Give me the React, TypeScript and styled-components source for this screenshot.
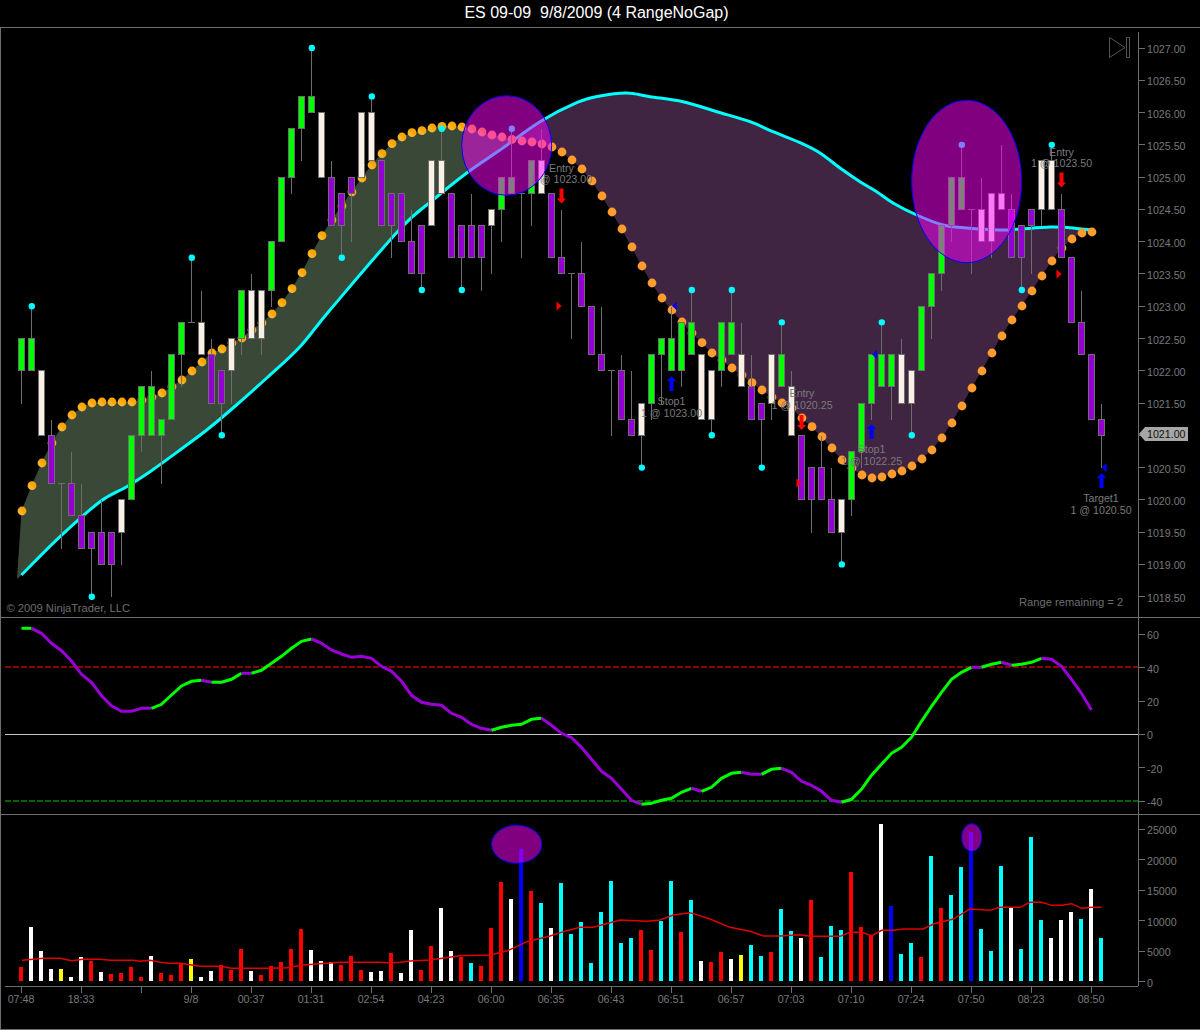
import React from "react";
import styled, { createGlobalStyle } from "styled-components";

type Kind = "g" | "w" | "p" | "d";
type Bar = [Kind, number, number, number?, number?, ("u" | "d")?];

const GREEN = "#00ff00";
const LINEN = "#faf0e6";
const PURPLE = "#9400d3";
const EDGE = "#6e6e6e";

const barX = (i: number) => 21.5 + i * 10;
const priceY = (p: number) => 48 + (1027 - p) * 64.55;
const snap = (v: number) => Math.floor(v) + 0.5;

// kind, body top, body bottom, high, low, dot
const bars: Bar[] = [
  ["g", 1022.5, 1022, undefined, 1021.5],
  ["g", 1022.5, 1022, 1023, undefined, "u"],
  ["w", 1022, 1021],
  ["p", 1021, 1020.25, 1021.25],
  ["d", 1020.25, 1020.25, undefined, 1019.25],
  ["p", 1020.25, 1019.75, 1020.75],
  ["p", 1019.75, 1019.25, 1020.25],
  ["p", 1019.5, 1019.25, undefined, 1018.5, "d"],
  ["p", 1019.5, 1019, 1020],
  ["p", 1019.5, 1019, undefined, 1018.5],
  ["w", 1020, 1019.5, undefined, 1019],
  ["g", 1021, 1020],
  ["g", 1021.75, 1021, undefined, 1020.75],
  ["g", 1021.75, 1021, 1022],
  ["g", 1021.25, 1021, undefined, 1020.25],
  ["g", 1022.25, 1021.25],
  ["g", 1022.75, 1022.25, undefined, 1021.75],
  ["d", 1022.75, 1022.75, 1023.75, undefined, "u"],
  ["w", 1022.75, 1022.25, 1023.25],
  ["p", 1022.25, 1021.5, 1022.5],
  ["p", 1022, 1021.5, undefined, 1021, "d"],
  ["w", 1022.5, 1022, undefined, 1021.5],
  ["g", 1023.25, 1022.5, undefined, 1022.25],
  ["w", 1023.25, 1022.5, 1023.5],
  ["w", 1023.25, 1022.5, undefined, 1022.25],
  ["g", 1024, 1023.25, undefined, 1023],
  ["g", 1025, 1024],
  ["g", 1025.75, 1025, undefined, 1024.75],
  ["g", 1026.25, 1025.75, undefined, 1025.25],
  ["g", 1026.25, 1026, 1027, undefined, "u"],
  ["w", 1026, 1025],
  ["p", 1025, 1024.25, 1025.25],
  ["p", 1024.75, 1024.25, undefined, 1023.75, "d"],
  ["p", 1025, 1024.75, undefined, 1024],
  ["w", 1026, 1025],
  ["w", 1026, 1025.25, 1026.25, undefined, "u"],
  ["p", 1025.25, 1024.25],
  ["p", 1024.75, 1024.25, undefined, 1023.75],
  ["p", 1024.75, 1024],
  ["p", 1024, 1023.5, 1024.5],
  ["p", 1024.25, 1023.5, undefined, 1023.25, "d"],
  ["w", 1025.25, 1024.25],
  ["w", 1025.25, 1024.75, 1025.75, undefined, "u"],
  ["p", 1024.75, 1023.75],
  ["p", 1024.25, 1023.75, undefined, 1023.25, "d"],
  ["p", 1024.25, 1023.75, 1024.75],
  ["p", 1024.25, 1023.75, undefined, 1023.25],
  ["w", 1024.5, 1024.25, undefined, 1023.5],
  ["g", 1025, 1024.5, undefined, 1024],
  ["g", 1025, 1024.75, 1025.75, undefined, "u"],
  ["d", 1024.75, 1024.75, undefined, 1023.75],
  ["g", 1025.25, 1024.75, undefined, 1024.25],
  ["w", 1025.25, 1024.75, 1025.75],
  ["p", 1024.75, 1023.75],
  ["p", 1023.75, 1023.5, 1024.5],
  ["d", 1023.5, 1023.5, undefined, 1022.5],
  ["p", 1023.5, 1023, 1024],
  ["p", 1023, 1022.25],
  ["p", 1022.25, 1022, 1023],
  ["d", 1022, 1022, undefined, 1021],
  ["p", 1022, 1021.25, 1022.25],
  ["p", 1021.25, 1021, 1022],
  ["w", 1021.5, 1021, undefined, 1020.5, "d"],
  ["g", 1022.25, 1021.5, undefined, 1021.25],
  ["g", 1022.5, 1022.25, undefined, 1021.5],
  ["g", 1022.5, 1022, 1023],
  ["g", 1022.75, 1022, undefined, 1021.75],
  ["g", 1022.75, 1022.25, 1023.25, undefined, "u"],
  ["w", 1022.25, 1021.25],
  ["w", 1022, 1021.25, undefined, 1021, "d"],
  ["g", 1022.75, 1022, undefined, 1021.75],
  ["g", 1022.75, 1022.25, 1023.25, undefined, "u"],
  ["w", 1022.25, 1021.75, 1022.75],
  ["p", 1021.75, 1021.25, 1022.25],
  ["p", 1021.5, 1021.25, undefined, 1020.5, "d"],
  ["w", 1022.25, 1021.5, undefined, 1021.25],
  ["g", 1022.25, 1021.75, 1022.75, undefined, "u"],
  ["w", 1021.75, 1021, 1022],
  ["p", 1021, 1020],
  ["p", 1020.5, 1020, undefined, 1019.5],
  ["p", 1020.5, 1020, 1021],
  ["p", 1020, 1019.5, 1020.5],
  ["w", 1020, 1019.5, undefined, 1019, "d"],
  ["g", 1020.75, 1020, undefined, 1019.75],
  ["g", 1021.5, 1020.75, undefined, 1020.5],
  ["g", 1022.25, 1021.5, undefined, 1021.25],
  ["g", 1022.25, 1021.75, 1022.75, undefined, "u"],
  ["g", 1022.25, 1021.75, undefined, 1021.25],
  ["w", 1022.25, 1021.5, 1022.5],
  ["w", 1022, 1021.5, undefined, 1021, "d"],
  ["g", 1023, 1022],
  ["g", 1023.5, 1023, undefined, 1022.5],
  ["g", 1024.25, 1023.5, undefined, 1023.25],
  ["g", 1025, 1024.25, undefined, 1024],
  ["g", 1025, 1024.5, 1025.5, undefined, "u"],
  ["d", 1024.5, 1024.5, undefined, 1023.5],
  ["w", 1024.5, 1024, 1025],
  ["w", 1024.75, 1024, undefined, 1023.75],
  ["w", 1024.75, 1024.5, 1025.5],
  ["p", 1024.5, 1023.75, 1024.75],
  ["p", 1024.25, 1023.75, undefined, 1023.25, "d"],
  ["p", 1024.5, 1024.25, undefined, 1023.5],
  ["w", 1025.25, 1024.5, undefined, 1024.25],
  ["w", 1025.25, 1024.5, 1025.5, undefined, "u"],
  ["p", 1024.5, 1023.75, 1024.75],
  ["p", 1023.75, 1022.75],
  ["p", 1022.75, 1022.25, 1023.25],
  ["p", 1022.25, 1021.25],
  ["p", 1021.25, 1021, 1021.5, 1020.5],
];

const bandY = [
  511, 485.7, 463, 443, 427, 415, 407, 403, 402, 402, 402, 402, 400, 397, 393, 386.7, 380, 371,
  362, 353, 349, 343, 338, 330, 323, 314, 302.7, 288.7, 272.7, 253.7, 235.7, 220, 206, 192, 178,
  165, 153.7, 143.7, 137, 132.7, 130.7, 128, 126.3, 126, 127, 129, 132, 135, 137, 139.3, 141, 142,
  144, 147, 152, 160, 169, 181, 196, 212, 229, 247, 266, 283, 298, 310, 322, 333, 342.7, 353, 360,
  368, 375, 382.7, 390, 397, 403, 408, 418, 426.7, 436.7, 448, 460, 468, 475, 478, 477, 474, 471,
  466, 459, 450, 438, 423, 406, 388, 371, 353, 336, 320, 306, 291, 276, 261, 248, 239, 233, 232,
];

const averageLine: [number, number][] = [
  [21.5, 575], [60, 536.7], [100, 501.7], [126.7, 486.7], [150, 471.7], [180, 450], [206.7, 430],
  [233, 408], [266.7, 378], [300, 346.7], [330, 310], [400, 229], [433, 200], [466.7, 173],
  [500, 150], [540, 121.7], [576.7, 102.7], [600, 96], [626.7, 93], [650, 96.7], [683, 101.7],
  [716.7, 111.7], [750, 121.7], [773, 131.7], [800, 142.7], [820, 153], [840, 168], [860, 181.7],
  [876.7, 191.7], [893, 203], [916.7, 215], [943, 225], [966.7, 228], [1000, 230], [1016.7, 229.3],
  [1050, 227], [1070, 227.7], [1091, 230],
];

const oscY = [
  628.3, 628.3, 633.3, 643.3, 650.7, 661, 674.3, 682.3, 695.7, 705.7, 711.3, 711.3, 708.3, 708.3,
  704.3, 695, 686, 681.3, 680.3, 682.3, 682.3, 679.3, 673.3, 673.3, 670.3, 663.3, 656.3, 648.3,
  641.3, 639, 643.3, 650, 654, 657.3, 656.3, 658.3, 666.3, 671.3, 681.3, 695.3, 702.3, 704.3,
  705.3, 713.3, 717.3, 724.3, 728.3, 730.3, 727.3, 725.3, 724.3, 719.3, 718.3, 725.3, 733.3, 737.7,
  747.3, 759.3, 771.3, 778.3, 789.3, 800.3, 804.3, 803.3, 800.3, 798.3, 792.3, 788.3, 791.3, 787.3,
  778.3, 773.3, 772.3, 774.3, 774.3, 769.3, 768.3, 772.3, 781.3, 785.3, 791.3, 800.3, 802.3, 799.3,
  789.3, 775.3, 764.3, 753.3, 747.3, 737.3, 721.3, 706.3, 692.3, 679.3, 672.3, 667.3, 667.3, 664.3,
  662.3, 665.3, 664.3, 662.3, 658.3, 659.3, 666.3, 679.3, 693.3, 710,
];

// index ranges of the oscillator drawn green, everything else is purple
const oscGreen = [[0, 1], [13, 18], [19, 22], [23, 29], [47, 52], [62, 67], [68, 72], [74, 76], [82, 95], [96, 98], [99, 102]];

const volumes = [
  14, 54, 30, 12, 12, 4, 24, 20, 9, 7, 8, 14, 4, 25, 8, 6, 17, 22, 4, 10, 16, 11, 32, 10, 6, 15, 19,
  32, 52, 31, 20, 19, 16, 25, 11, 9, 10, 28, 8, 51, 11, 35, 73, 30, 24, 18, 15, 53, 99, 82, 132, 90,
  78, 53, 98, 47, 59, 18, 69, 100, 38, 43, 51, 31, 60, 100, 49, 81, 20, 19, 29, 22, 26, 36, 25, 29,
  72, 50, 43, 81, 24, 55, 51, 109, 54, 46, 157, 75, 27, 38, 24, 125, 73, 86, 114, 149, 52, 30, 115,
  74, 32, 144, 61, 43, 61, 69, 62, 92, 43,
];
const volumeKinds = [
  "rwwwywwrwr", "rrrwrrryww", "rrrwrrrrrw", "wwrrrwwrww", "rrwwrcrrrw", "brcwcccccc",
  "ccrrccrcwr", "rwyccrccwr", "cccrrrwbcc", "rcrccbcccw", "cccwwwcwc",
].join("");
const volumeColor: Record<string, string> = {
  r: "#ff0000",
  w: "#ffffff",
  c: "#00ffff",
  b: "#0000ff",
  y: "#ffff00",
};

const volumeAverage: [number, number][] = [
  [21.7, 960.3], [33.3, 959.3], [43.3, 958.3], [60, 958.3], [71.7, 960.7], [83.3, 959.3], [100, 959.3],
  [110, 960.3], [133.3, 960.3], [140, 961.3], [150, 960.3], [160, 962.3], [170, 963.3], [180, 963.3],
  [200, 966.3], [220, 966.3], [231.7, 968.3], [270, 968.3], [286.7, 967.7], [303.3, 965], [320, 963.7],
  [340, 962.3], [380, 962.3], [390, 963], [400, 962.3], [410, 961], [430, 960], [460, 955.7], [490, 955],
  [506.7, 951], [516.7, 946.7], [526.7, 941.7], [550, 936], [566.7, 930.7], [580, 927.3], [593.3, 927.3],
  [620, 920], [646.7, 921.3], [660, 920], [673.3, 915], [690, 912.7], [710, 919], [730, 927.3], [750, 931.3],
  [763.3, 936], [780, 936], [800, 934.7], [810, 936.3], [840, 936.3], [850, 932.3], [861.7, 932.3],
  [871.7, 935.7], [881.7, 930.3], [893.3, 930.3], [903.3, 929], [923.3, 929], [933.3, 924], [953.3, 919],
  [970, 909], [990, 910.3], [1000, 907.3], [1020, 907.3], [1030, 902.3], [1041.7, 902.3], [1051.7, 905.3],
  [1061.7, 905.3], [1071.7, 903.7], [1081.7, 908.3], [1091.7, 907.3], [1101.7, 907.3],
];

const priceTicks = ["1027.00", "1026.50", "1026.00", "1025.50", "1025.00", "1024.50", "1024.00", "1023.50", "1023.00", "1022.50", "1022.00", "1021.50", "1021.00", "1020.50", "1020.00", "1019.50", "1019.00", "1018.50"];
const oscTicks = ["60", "40", "20", "0", "-20", "-40"];
const volumeTicks = ["25000", "20000", "15000", "10000", "5000", "0"];
const timeTicks: [string, number][] = [
  ["07:48", 60], ["18:33", 60], ["", 50], ["9/8", 60], ["00:37", 60], ["01:31", 60], ["02:54", 60],
  ["04:23", 60], ["06:00", 60], ["06:35", 60], ["06:43", 60], ["06:51", 60], ["06:57", 60], ["07:03", 60],
  ["07:10", 60], ["07:24", 60], ["07:50", 60], ["08:23", 60], ["08:50", 60],
];

const notes: [number, number, string, string][] = [
  [561.5, 167.7, "Entry", "1 @ 1023.00"],
  [671.5, 401, "Stop1", "1 @ 1023.00"],
  [802, 393, "Entry", "1 @ 1020.25"],
  [871.5, 449.3, "Stop1", "1 @ 1022.25"],
  [1061.5, 151.7, "Entry", "1 @ 1023.50"],
  [1101, 498.3, "Target1", "1 @ 1020.50"],
];

const lineAt = (pts: [number, number][], x: number) => {
  for (let i = 1; i < pts.length; i++) {
    if (x <= pts[i][0]) {
      const [x0, y0] = pts[i - 1];
      const [x1, y1] = pts[i];
      return y0 + ((y1 - y0) * (x - x0)) / (x1 - x0);
    }
  }
  return pts[pts.length - 1][1];
};

const toPoints = (pts: [number, number][]) => pts.map((p) => p.join(",")).join(" ");

// rounds off the corners between the read-off points of the moving average
const smoothPath = (pts: [number, number][]) => {
  let d = `M${pts[0][0]} ${pts[0][1]}`;
  for (let i = 0; i < pts.length - 1; i++) {
    const a = pts[Math.max(i - 1, 0)];
    const b = pts[i];
    const c = pts[i + 1];
    const e = pts[Math.min(i + 2, pts.length - 1)];
    const c1x = b[0] + (c[0] - a[0]) / 6;
    const c1y = b[1] + (c[1] - a[1]) / 6;
    const c2x = c[0] - (e[0] - b[0]) / 6;
    const c2y = c[1] - (e[1] - b[1]) / 6;
    d += `C${c1x} ${c1y} ${c2x} ${c2y} ${c[0]} ${c[1]}`;
  }
  return d;
};

const cloud = (from: number, to: number, start: [number, number][], end: [number, number][]) => {
  const upper: [number, number][] = [];
  const lower: [number, number][] = [];
  for (let i = from; i <= to; i++) {
    upper.push([barX(i), bandY[i]]);
    lower.unshift([barX(i), lineAt(averageLine, barX(i))]);
  }
  return toPoints([...start, ...upper, ...end, ...lower]);
};

const oscRuns = () => {
  const runs: { color: string; pts: [number, number][] }[] = [];
  for (let i = 0; i < oscY.length - 1; i++) {
    const color = oscGreen.some(([a, b]) => i >= a && i < b) ? GREEN : "#9a00d6";
    const last = runs[runs.length - 1];
    if (last && last.color === color) last.pts.push([barX(i + 1), oscY[i + 1]]);
    else runs.push({ color, pts: [[barX(i), oscY[i]], [barX(i + 1), oscY[i + 1]]] });
  }
  return runs;
};

function DownArrow({ x, y }: { x: number; y: number }) {
  return <path d={`M${x - 2} ${y}h4v10h2.5L${x} ${y + 15}L${x - 4.5} ${y + 10}h2.5z`} fill="#ff0000" />;
}

function UpArrow({ x, y }: { x: number; y: number }) {
  return <path d={`M${x - 2} ${y + 15}h4v-10h2.5L${x} ${y}L${x - 4.5} ${y + 5}h2.5z`} fill="#0000ff" />;
}

function RightMark({ x, y }: { x: number; y: number }) {
  return <path d={`M${x} ${y - 4.5}L${x + 5} ${y}L${x} ${y + 4.5}z`} fill="#ff0000" />;
}

function LeftMark({ x, y }: { x: number; y: number }) {
  return <path d={`M${x + 5} ${y - 4.5}L${x} ${y}L${x + 5} ${y + 4.5}z`} fill="#0000ff" />;
}

function Candle({ bar, i }: { bar: Bar; i: number }) {
  const [kind, top, bottom, high, low] = bar;
  const x = Math.floor(barX(i)) + 0.5;
  const yTop = snap(priceY(top));
  const yBottom = snap(priceY(bottom));
  const fill = kind === "g" ? GREEN : kind === "w" ? LINEN : PURPLE;
  return (
    <g>
      {high !== undefined && <line x1={x} x2={x} y1={snap(priceY(high))} y2={yTop} stroke={EDGE} />}
      {low !== undefined && <line x1={x} x2={x} y1={yBottom} y2={snap(priceY(low))} stroke={EDGE} />}
      {kind === "d" ? (
        <line x1={x - 3.5} x2={x + 3.5} y1={yTop} y2={yTop} stroke={EDGE} />
      ) : (
        <rect x={x - 3} y={yTop} width={6} height={yBottom - yTop} fill={fill} stroke={EDGE} />
      )}
    </g>
  );
}

function PriceChart() {
  return (
    <Plot viewBox="1 28 1137 589" width={1137} height={589}>
      <defs>
        <linearGradient id="bandDot" x1="0" y1="1" x2="1" y2="0">
          <stop offset="0.45" stopColor="#f7b52c" />
          <stop offset="0.45" stopColor="#ffa500" />
        </linearGradient>
      </defs>
      <polygon points={cloud(0, 49, [[17, 579]], [[515, 139.5]])} fill="#394837" />
      <polygon points={cloud(50, 107, [[515, 139.5]], [])} fill="#402542" />
      <path d={smoothPath(averageLine)} fill="none" stroke="#00ffff" strokeWidth={3} />
      {bandY.map((y, i) => (
        <circle key={i} cx={barX(i) + 0.5} cy={y} r={4.4} fill={i < 47 ? "url(#bandDot)" : "#ff9c2e"} />
      ))}
      <g shapeRendering="crispEdges">
        {bars.map((bar, i) => (
          <Candle key={i} bar={bar} i={i} />
        ))}
      </g>
      {bars.map((bar, i) =>
        bar[5] ? (
          <circle
            key={i}
            cx={barX(i) + 0.3}
            cy={priceY(bar[5] === "u" ? (bar[3] as number) : (bar[4] as number))}
            r={3.2}
            fill="#00ffff"
          />
        ) : null
      )}
      {notes.map(([x, y, title, fill]) => (
        <g key={title + x}>
          <Note x={x} y={y + 4}>{title}</Note>
          <Note x={x} y={y + 15.6}>{fill}</Note>
        </g>
      ))}
      <DownArrow x={561.5} y={188.5} />
      <DownArrow x={801.5} y={415} />
      <DownArrow x={1061.5} y={172.5} />
      <UpArrow x={671.5} y={376} />
      <UpArrow x={871.5} y={424} />
      <UpArrow x={1101.5} y={473} />
      <RightMark x={556.5} y={306} />
      <RightMark x={796.5} y={483} />
      <RightMark x={1056.5} y={274} />
      <LeftMark x={672} y={306} />
      <LeftMark x={872} y={354.5} />
      <LeftMark x={1101.5} y={467.5} />
      <ellipse cx={506.7} cy={145.5} rx={45} ry={49.8} fill="#ff00ff" fillOpacity={0.5} stroke="#0000ff" />
      <ellipse cx={966.7} cy={181.5} rx={55} ry={81.2} fill="#ff00ff" fillOpacity={0.5} stroke="#0000ff" />
      <path d="M1109.5 37.5V57.5L1125 47.5z M1126.5 37.5h3v20h-3z" fill="none" stroke="#555555" />
      <Caption x={6.5} y={611.5}>© 2009 NinjaTrader, LLC</Caption>
      <Caption x={1019} y={606}>Range remaining = 2</Caption>
    </Plot>
  );
}

function OscillatorChart() {
  return (
    <Plot viewBox="1 618 1137 196" width={1137} height={196}>
      <g shapeRendering="crispEdges">
        <line x1={5} x2={1138} y1={667} y2={667} stroke="#8b0000" strokeWidth={2} strokeDasharray="6 2" />
        <line x1={5} x2={1138} y1={734.5} y2={734.5} stroke="#c8c8c8" />
        <line x1={5} x2={1138} y1={801} y2={801} stroke="#006400" strokeWidth={2} strokeDasharray="6 2" />
      </g>
      {oscRuns().map((run, i) => (
        <polyline key={i} points={toPoints(run.pts)} fill="none" stroke={run.color} strokeWidth={3} />
      ))}
    </Plot>
  );
}

function VolumeChart() {
  return (
    <Plot viewBox="1 815 1137 171" width={1137} height={171}>
      <g shapeRendering="crispEdges">
        {volumes.map((h, i) => (
          <rect key={i} x={19 + i * 10} y={981 - h} width={4} height={h} fill={volumeColor[volumeKinds[i]]} />
        ))}
      </g>
      <polyline points={toPoints(volumeAverage)} fill="none" stroke="#e00000" strokeWidth={1.4} />
      <ellipse cx={516.7} cy={844.3} rx={25} ry={19} fill="#ff00ff" fillOpacity={0.5} stroke="#0000ff" />
      <ellipse cx={971.7} cy={837.5} rx={10} ry={13.8} fill="#ff00ff" fillOpacity={0.5} stroke="#0000ff" />
    </Plot>
  );
}

function Scale({ ticks, step, inset, lead }: { ticks: string[]; step: number; inset?: number; lead?: number }) {
  return (
    <Axis $inset={inset ?? 0} $lead={lead ?? 0}>
      {ticks.map((t) => (
        <Tick key={t} $step={step}>
          <span>{t}</span>
        </Tick>
      ))}
    </Axis>
  );
}

export default function App() {
  return (
    <Page>
      <GlobalStyle />
      <Title>ES 09-09  9/8/2009 (4 RangeNoGap)</Title>
      <Frame>
        <Panel $height={590}>
          <PriceChart />
          <PriceScale>
            <Scale ticks={priceTicks} step={32.27} inset={4} />
            <PriceTag>1021.00</PriceTag>
          </PriceScale>
        </Panel>
        <Panel $height={197}>
          <OscillatorChart />
          <Scale ticks={oscTicks} step={33.4} lead={-0.4} />
        </Panel>
        <Panel $height={171} $plain>
          <VolumeChart />
          <Scale ticks={volumeTicks} step={30.6} lead={-1.3} />
        </Panel>
        <TimeAxis>
          {timeTicks.map(([label, span]) => (
            <TimeCell key={label + span} $span={span}>
              <TimeLabel>{label}</TimeLabel>
            </TimeCell>
          ))}
        </TimeAxis>
      </Frame>
    </Page>
  );
}

const GlobalStyle = createGlobalStyle`
  html, body {
    margin: 0;
    padding: 0;
    background: #000000;
  }
  * {
    box-sizing: border-box;
  }
`;

const Page = styled.div`
  width: 1200px;
  height: 1030px;
  display: flex;
  flex-direction: column;
  background: #000000;
  font-family: "Liberation Sans", Arial, sans-serif;
  overflow: hidden;
`;

const Title = styled.div`
  flex: 0 0 28px;
  padding: 4px 7px 0 0;
  border-bottom: 1px solid ${EDGE};
  color: #ffffff;
  font-size: 16px;
  line-height: 18px;
  text-align: center;
  white-space: pre;
`;

const Frame = styled.div`
  flex: 1;
  min-height: 0;
  display: flex;
  flex-direction: column;
  border-left: 1px solid ${EDGE};
  border-bottom: 1px solid ${EDGE};
`;

const Panel = styled.section<{ $height: number; $plain?: boolean }>`
  flex: 0 0 ${(p) => p.$height}px;
  min-height: 0;
  display: flex;
  border-bottom: ${(p) => (p.$plain ? "none" : `1px solid ${EDGE}`)};
`;

const Plot = styled.svg`
  display: block;
  flex: 0 0 1137px;
`;

const PriceScale = styled.div`
  position: relative;
  flex: 1;
  display: flex;
`;

const Axis = styled.div<{ $inset: number; $lead: number }>`
  flex: 1;
  margin-top: ${(p) => p.$inset}px;
  border-left: 1px solid ${EDGE};
  display: flex;
  flex-direction: column;
  & > :first-child {
    margin-top: ${(p) => p.$lead}px;
  }
`;

const Tick = styled.div<{ $step: number }>`
  flex: 0 0 ${(p) => p.$step}px;
  display: flex;
  align-items: center;
  color: #787878;
  font-size: 10.67px;
  &::before {
    content: "";
    flex: 0 0 6px;
    height: 1px;
    margin-right: 2px;
    background: ${EDGE};
  }
  & > span {
    position: relative;
    top: 1px;
  }
`;

const PriceTag = styled.div`
  position: absolute;
  left: 1px;
  top: 399px;
  width: 49px;
  height: 14px;
  padding-left: 8px;
  background: #a6a6a6;
  clip-path: polygon(0 50%, 6px 0, 100% 0, 100% 100%, 6px 100%);
  color: #101010;
  font-size: 10.67px;
  line-height: 14px;
`;

const TimeAxis = styled.div`
  flex: 1;
  width: 1133px;
  margin-left: 4px;
  padding-left: 16px;
  border-top: 1px solid ${EDGE};
  display: flex;
`;

const TimeCell = styled.div<{ $span: number }>`
  flex: 0 0 ${(p) => p.$span}px;
  &::before {
    content: "";
    display: block;
    width: 1px;
    height: 6px;
    background: ${EDGE};
  }
`;

const TimeLabel = styled.div`
  width: 60px;
  margin: 0 0 0 -30px;
  color: #787878;
  font-size: 10.67px;
  line-height: 12px;
  text-align: center;
`;

const Note = styled.text`
  fill: #7a7a7a;
  font-size: 10.67px;
  text-anchor: middle;
`;

const Caption = styled.text`
  fill: #6e6e6e;
  font-size: 11.2px;
`;
